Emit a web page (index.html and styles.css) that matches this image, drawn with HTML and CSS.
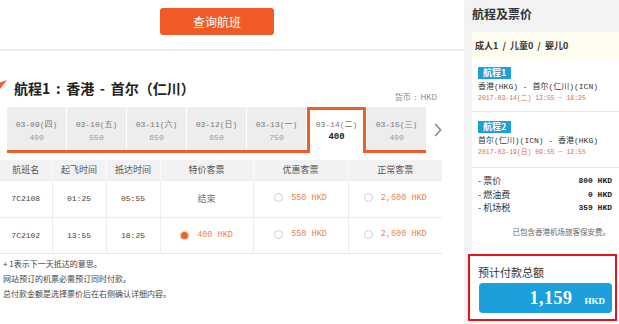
FILE: index.html
```html
<!DOCTYPE html>
<html lang="zh-CN">
<head>
<meta charset="utf-8">
<title>航程及票价</title>
<link rel="stylesheet" href="styles.css">
</head>
<body>
<div class="page">
  <main class="main">
    <div class="top"><button class="search-btn" type="button">查询航班</button></div>

    <div class="route-head">
      <h2 class="route-title"><svg class="route-icon" width="7" height="9" viewBox="0 0 7 9"><polygon points="0,2.5 7,0 0,9" fill="#ec5e2a"/></svg><span class="route-text">航程1 : 香港 - 首尔（仁川）</span></h2>
      <span class="currency">货币 : HKD</span>
    </div>

    <div class="date-bar">
      <div class="tabs">
        <div class="tab"><span class="tab-date mono">03-09(四)</span><span class="tab-price mono">400</span></div>
        <div class="tab"><span class="tab-date mono">03-10(五)</span><span class="tab-price mono">550</span></div>
        <div class="tab"><span class="tab-date mono">03-11(六)</span><span class="tab-price mono">650</span></div>
        <div class="tab"><span class="tab-date mono">03-12(日)</span><span class="tab-price mono">650</span></div>
        <div class="tab"><span class="tab-date mono">03-13(一)</span><span class="tab-price mono">750</span></div>
        <div class="tab is-active"><span class="tab-date mono">03-14(二)</span><span class="tab-price mono">400</span></div>
        <div class="tab"><span class="tab-date mono">03-15(三)</span><span class="tab-price mono">400</span></div>
      </div>
      <svg class="next" width="8" height="14" viewBox="0 0 8 14"><polyline points="1.2,1 6.6,7 1.2,13" fill="none" stroke="#8a8a8a" stroke-width="1.6"/></svg>
    </div>

    <table class="flights">
      <colgroup>
        <col class="c-no"><col class="c-dep"><col class="c-arr"><col class="c-f1"><col class="c-f2"><col class="c-f3">
      </colgroup>
      <thead>
        <tr><th>航班名</th><th>起飞时间</th><th>抵达时间</th><th>特价客票</th><th>优惠客票</th><th>正常客票</th></tr>
      </thead>
      <tbody>
        <tr class="row-1">
          <td class="mono">7C2108</td>
          <td class="mono">01:25</td>
          <td class="mono">05:55</td>
          <td class="closed">结束</td>
          <td><span class="fare"><i class="radio"></i><span class="mono">550 HKD</span></span></td>
          <td><span class="fare"><i class="radio"></i><span class="mono">2,600 HKD</span></span></td>
        </tr>
        <tr class="row-2">
          <td class="mono">7C2102</td>
          <td class="mono">13:55</td>
          <td class="mono">18:25</td>
          <td><span class="fare"><i class="radio is-checked"></i><span class="mono">400 HKD</span></span></td>
          <td><span class="fare"><i class="radio"></i><span class="mono">550 HKD</span></span></td>
          <td><span class="fare"><i class="radio"></i><span class="mono">2,600 HKD</span></span></td>
        </tr>
      </tbody>
    </table>

    <ul class="notes">
      <li>+ 1表示下一天抵达的意思。</li>
      <li>网站预订的机票必需预订同时付款。</li>
      <li>总付款金额是选择票价后在右侧确认详细内容。</li>
    </ul>
  </main>

  <aside class="side">
    <h3 class="side-title">航程及票价</h3>
    <div class="side-card">
      <div class="pax">成人1 &nbsp;/ &nbsp;儿童0 &nbsp;/ &nbsp;婴儿0</div>
      <div class="leg">
        <span class="badge">航程1</span>
        <p class="leg-route mono">香港(HKG) - 首尔(仁川)(ICN)</p>
        <p class="leg-time mono">2017-03-14(二) 13:55 ~ 18:25</p>
      </div>
      <div class="leg">
        <span class="badge">航程2</span>
        <p class="leg-route mono">首尔(仁川)(ICN) - 香港(HKG)</p>
        <p class="leg-time mono">2017-03-19(日) 09:55 ~ 12:55</p>
      </div>
      <ul class="fees">
        <li><span>- 票价</span><b class="mono">800 HKD</b></li>
        <li><span>- 燃油费</span><b class="mono">0 HKD</b></li>
        <li><span>- 机场税</span><b class="mono">359 HKD</b></li>
      </ul>
      <p class="fee-note">已包含香港机场旅客保安费。</p>
      <div class="total">
        <p class="total-label">预计付款总额</p>
        <div class="total-amount"><b class="amount">1,159</b><b class="cur">HKD</b></div>
      </div>
    </div>
  </aside>
</div>
</body>
</html>
```

FILE: styles.css
```css
* { box-sizing: border-box; }
html, body { margin: 0; padding: 0; }
body {
  font-family: "Noto Sans CJK SC", "Liberation Sans", sans-serif;
  color: #333;
  background: #fff;
  width: 619px;
  height: 324px;
  overflow: hidden;
}
.mono { font-family: "Liberation Mono", "Noto Sans CJK SC", monospace; }

.page { display: flex; height: 324px; }
.main { width: 464px; flex: none; }

.top {
  height: 51px;
  border-bottom: 2px solid #ececec;
  padding: 8px 0 0 160px;
}
.search-btn {
  display: block;
  width: 114px;
  height: 27px;
  padding: 0;
  border: 0;
  border-radius: 3px;
  background: #ef5a26;
  color: #fff;
  font: 12px/27px "Noto Sans CJK SC", sans-serif;
}

.route-head {
  display: flex;
  justify-content: space-between;
  align-items: flex-end;
  margin-top: 27px;
  padding-right: 27px;
}
.route-title {
  margin: 0 0 4px 0;
  display: flex;
  gap: 7px;
  font-size: 14px;
  line-height: 20px;
  font-weight: bold;
  color: #222;
}
.route-text { word-spacing: 2.5px; }
.route-icon { margin-top: 2px; flex: none; }
.currency { font-size: 8px; line-height: 10px; color: #888; word-spacing: 2px; }

.date-bar {
  display: flex;
  align-items: center;
  margin-top: 5px;
  padding-left: 7px;
}
.tabs {
  display: flex;
  align-items: flex-end;
  gap: 1px;
  border-bottom: 3px solid #ec5e2a;
}
.tab {
  width: 59px;
  height: 43px;
  padding-top: 11px;
  background: #ededed;
  display: flex;
  flex-direction: column;
  align-items: center;
  font-size: 8px;
  line-height: 13px;
}
.tab-date { color: #777; }
.tab-price { color: #9a9a9a; }
.tab.is-active {
  height: 46px;
  margin-bottom: -3px;
  padding-top: 8px;
  border: 3px solid #ec5e2a;
  border-bottom: 0;
  background: #fff;
}
.tab.is-active .tab-price { color: #222; font-weight: bold; font-size: 9px; }
.next { margin-left: 8px; }

.flights {
  margin-top: 7px;
  width: 442px;
  border-collapse: collapse;
  table-layout: fixed;
  border-bottom: 1px solid #e6e6e6;
}
.c-no { width: 52px; }
.c-dep { width: 54px; }
.c-arr { width: 54px; }
.c-f1 { width: 93px; }
.c-f2 { width: 95px; }
.c-f3 { width: 94px; }
.flights th {
  height: 20px;
  padding: 0;
  background: #f2f2f2;
  border-left: 1px solid #fafafa;
  font-size: 9px;
  font-weight: normal;
  color: #555;
}
.flights th:first-child, .flights td:first-child { border-left: 0; }
.flights td {
  padding: 0;
  text-align: center;
  border-left: 1px solid #ececec;
  border-top: 1px solid #ececec;
  font-size: 8px;
  color: #444;
}
.row-1 td { height: 37px; }
.row-2 td { height: 36px; }
.flights td.closed { font-size: 9px; color: #777; }
.fare {
  display: inline-flex;
  align-items: center;
  gap: 8px;
  color: #e8854f;
  font-size: 8.5px;
}
.radio {
  display: inline-block;
  width: 9px;
  height: 9px;
  border: 1px solid #cfcfcf;
  border-radius: 50%;
  background: #fff;
}
.radio.is-checked {
  width: 7px;
  height: 7px;
  margin: 0 1px;
  border: 0;
  background: #e9652f;
  box-shadow: 0 0 0 1.5px #f8d3c1;
}

.notes {
  list-style: none;
  margin: 2px 0 0 0;
  padding: 0 0 0 3px;
  font-size: 8px;
  line-height: 15px;
  color: #444;
}

.side {
  width: 155px;
  flex: none;
  background: #f3f3f3;
  padding-left: 8px;
  display: flex;
  flex-direction: column;
}
.side-title {
  margin: 0;
  height: 32px;
  line-height: 28px;
  font-size: 12px;
  font-weight: bold;
  color: #333;
}
.side-card { flex: 1; background: #fff; }
.pax {
  height: 28px;
  line-height: 28px;
  padding-left: 3px;
  background: #fdfcee;
  font-size: 9px;
  font-weight: bold;
  color: #333;
}
.leg {
  padding: 7px 6px 6px 6px;
  border-bottom: 1px solid #e8e8e8;
  font-size: 9px;
  line-height: 12px;
}
.leg + .leg { padding-top: 9px; padding-bottom: 8px; }
.badge {
  display: inline-block;
  padding: 0 5px;
  background: #1e9fd8;
  color: #fff;
  font-size: 9px;
  font-weight: bold;
  line-height: 12px;
  vertical-align: top;
}
.leg-route { margin: 2px 0 0; font-size: 8px; line-height: 12px; color: #333; }
.leg-time { margin: 0; font-size: 6.5px; line-height: 12px; color: #e2674f; }
.fees {
  list-style: none;
  margin: 0;
  padding: 6px 7px 0 6px;
  font-size: 9px;
  line-height: 13.5px;
}
.fees li { display: flex; justify-content: space-between; }
.fees b { font-size: 8px; color: #222; }
.fee-note {
  margin: 10px 0 0;
  padding-right: 9px;
  text-align: right;
  font-size: 7.5px;
  line-height: 13px;
  color: #666;
}
.total {
  margin: 16px 2px 0 -4px;
  padding: 9px 3px 6px 8px;
  border: 2px solid #e8141b;
  background: #fff;
}
.total-label { margin: 0; font-size: 11px; line-height: 14px; color: #333; }
.total-amount {
  margin: 4px 0 0 1px;
  height: 30px;
  border-radius: 4px;
  background: #1ba0db;
  display: flex;
  justify-content: flex-end;
  align-items: baseline;
  gap: 12px;
  padding-right: 7px;
  line-height: 31px;
  color: #fff;
  font-family: "Liberation Serif", serif;
}
.amount { font-size: 18px; letter-spacing: 0.5px; }
.cur { font-size: 9px; }
```
